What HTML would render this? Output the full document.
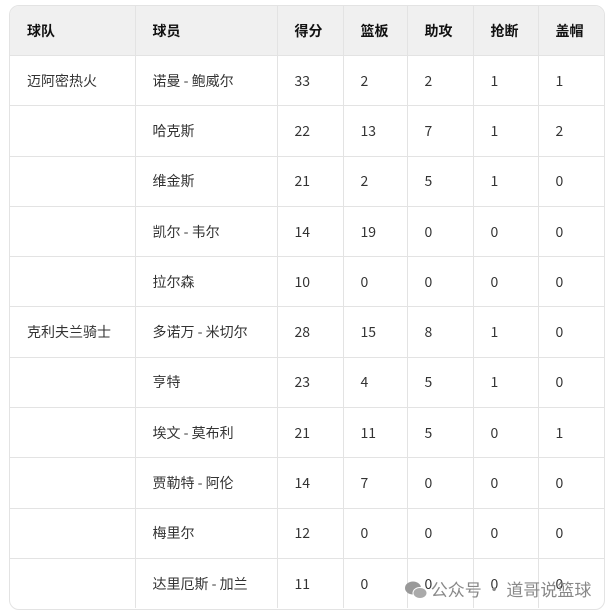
<!DOCTYPE html>
<html><head><meta charset="utf-8"><style>
body{margin:0;background:#fff;width:614px;height:614px;overflow:hidden;font-family:"Noto Sans CJK SC","Liberation Sans",sans-serif;}
.wrap{position:absolute;left:9px;top:5px;width:594px;height:603px;border:1px solid #e3e3e3;border-radius:10px;overflow:hidden;}
table{border-collapse:collapse;width:100%;table-layout:fixed;}
td,th{border-right:1px solid #e3e3e3;border-bottom:1px solid #e3e3e3;height:49.3px;padding:0 0 0 17px;text-align:left;font-size:14px;color:#333;font-weight:normal;}
th{background:#f0f0f0;color:#111;font-weight:bold;height:49px;}
tr td:last-child,tr th:last-child{border-right:none;}
tr:last-child td{border-bottom:none;}
.wm{position:absolute;left:405px;top:576px;font-size:17px;color:#888;font-family:"Noto Sans CJK SC",sans-serif;white-space:nowrap;}
</style></head><body>
<div class="wrap"><table>
<colgroup><col style="width:125px"><col style="width:142px"><col style="width:66px"><col style="width:64px"><col style="width:66px"><col style="width:65px"><col style="width:66px"></colgroup>
<tr><th>球队</th><th>球员</th><th>得分</th><th>篮板</th><th>助攻</th><th>抢断</th><th>盖帽</th></tr>
<tr><td>迈阿密热火</td><td>诺曼 - 鲍威尔</td><td>33</td><td>2</td><td>2</td><td>1</td><td>1</td></tr>
<tr><td></td><td>哈克斯</td><td>22</td><td>13</td><td>7</td><td>1</td><td>2</td></tr>
<tr><td></td><td>维金斯</td><td>21</td><td>2</td><td>5</td><td>1</td><td>0</td></tr>
<tr><td></td><td>凯尔 - 韦尔</td><td>14</td><td>19</td><td>0</td><td>0</td><td>0</td></tr>
<tr><td></td><td>拉尔森</td><td>10</td><td>0</td><td>0</td><td>0</td><td>0</td></tr>
<tr><td>克利夫兰骑士</td><td>多诺万 - 米切尔</td><td>28</td><td>15</td><td>8</td><td>1</td><td>0</td></tr>
<tr><td></td><td>亨特</td><td>23</td><td>4</td><td>5</td><td>1</td><td>0</td></tr>
<tr><td></td><td>埃文 - 莫布利</td><td>21</td><td>11</td><td>5</td><td>0</td><td>1</td></tr>
<tr><td></td><td>贾勒特 - 阿伦</td><td>14</td><td>7</td><td>0</td><td>0</td><td>0</td></tr>
<tr><td></td><td>梅里尔</td><td>12</td><td>0</td><td>0</td><td>0</td><td>0</td></tr>
<tr><td></td><td>达里厄斯 - 加兰</td><td>11</td><td>0</td><td>0</td><td>0</td><td>0</td></tr>
</table></div>
<div class="wm"><svg width="22" height="18" viewBox="0 0 22 18" style="vertical-align:-3px"><ellipse cx="8" cy="7" rx="8" ry="6.5" fill="#999"/><ellipse cx="15" cy="12" rx="7" ry="5.5" fill="#aaa" stroke="#fff" stroke-width="1"/></svg> 公众号 · 道哥说篮球</div>
</body></html>
